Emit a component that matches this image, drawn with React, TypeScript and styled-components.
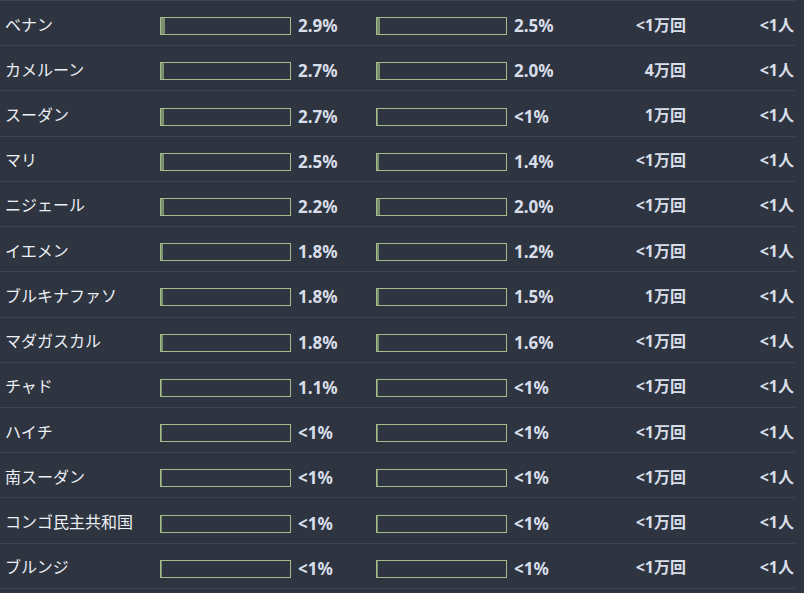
import React from "react";
import styled, { createGlobalStyle } from "styled-components";

const GlobalStyle = createGlobalStyle`
  html, body {
    margin: 0;
    padding: 0;
    background: #2e3440;
  }
  body {
    font-family: "Noto Sans", "Noto Sans CJK JP", sans-serif;
    color: #e5e9f0;
  }
`;

const rows = [
  { name: "ベナン", a: 2.9, b: 2.5, count: "<1万回", people: "<1人" },
  { name: "カメルーン", a: 2.7, b: 2.0, count: "4万回", people: "<1人" },
  { name: "スーダン", a: 2.7, b: 0, count: "1万回", people: "<1人" },
  { name: "マリ", a: 2.5, b: 1.4, count: "<1万回", people: "<1人" },
  { name: "ニジェール", a: 2.2, b: 2.0, count: "<1万回", people: "<1人" },
  { name: "イエメン", a: 1.8, b: 1.2, count: "<1万回", people: "<1人" },
  { name: "ブルキナファソ", a: 1.8, b: 1.5, count: "1万回", people: "<1人" },
  { name: "マダガスカル", a: 1.8, b: 1.6, count: "<1万回", people: "<1人" },
  { name: "チャド", a: 1.1, b: 0, count: "<1万回", people: "<1人" },
  { name: "ハイチ", a: 0, b: 0, count: "<1万回", people: "<1人" },
  { name: "南スーダン", a: 0, b: 0, count: "<1万回", people: "<1人" },
  { name: "コンゴ民主共和国", a: 0, b: 0, count: "<1万回", people: "<1人" },
  { name: "ブルンジ", a: 0, b: 0, count: "<1万回", people: "<1人" },
];

const Table = styled.div`
  width: 795px;
  border-top: 1px solid #3d4350;
`;

const Row = styled.div`
  display: grid;
  grid-template-columns: 160px 216px 216px 94px 108px;
  align-items: center;
  box-sizing: border-box;
  height: 45.23px;
  border-bottom: 1px solid #3d4350;
`;

const Name = styled.div`
  padding-left: 5px;
  font-family: "Noto Sans CJK JP", sans-serif;
  font-size: 16px;
  line-height: 20px;
  color: #eceff4;
  white-space: nowrap;
  margin-top: 1px;
`;

const Stat = styled.div`
  display: flex;
  align-items: center;
  gap: 7px;
  margin-top: 6px;
`;

const Bar = styled.div`
  box-sizing: border-box;
  width: 131px;
  height: 18px;
  border: 1px solid #a3be8c;
  display: flex;
`;

const Fill = styled.div`
  height: 100%;
  background: #7d8f6d;
`;

const Pct = styled.span`
  font-family: "Noto Sans", "Noto Sans CJK JP", sans-serif;
  font-weight: 700;
  font-size: 17px;
  line-height: 20px;
  color: #d8dee9;
`;

const Value = styled.div`
  text-align: right;
  font-family: "Noto Sans", "Noto Sans CJK JP", sans-serif;
  font-weight: 700;
  font-size: 16px;
  line-height: 20px;
  color: #d8dee9;
  margin-top: 3px;
  white-space: nowrap;
`;

const fmt = (v: number) => (v < 1 ? "<1%" : `${v.toFixed(1)}%`);

const StatCell = ({ value }: { value: number }) => (
  <Stat>
    <Bar>
      <Fill style={{ width: `${((value < 1 ? 0.5 : value) / 100) * 129}px` }} />
    </Bar>
    <Pct>{fmt(value)}</Pct>
  </Stat>
);

const App = () => {
  return (
    <>
      <GlobalStyle />
      <Table>
        {rows.map((r) => (
          <Row key={r.name}>
            <Name>{r.name}</Name>
            <StatCell value={r.a} />
            <StatCell value={r.b} />
            <Value>{r.count}</Value>
            <Value>{r.people}</Value>
          </Row>
        ))}
      </Table>
    </>
  );
};

export default App;
